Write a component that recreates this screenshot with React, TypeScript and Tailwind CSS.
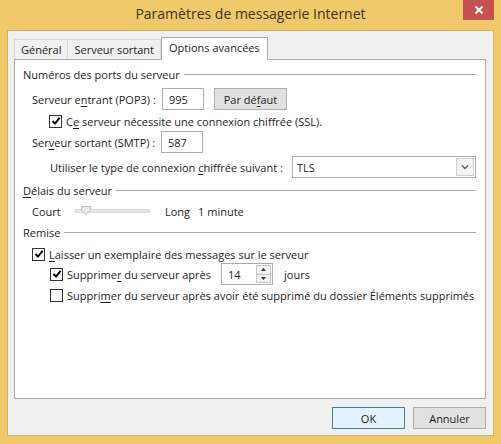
import React from "react";

const font = { fontFamily: '"Open Sans", "Noto Sans", sans-serif' };

function U(props: { children: React.ReactNode }) {
  return <span className="underline underline-offset-[2px] decoration-[1px]">{props.children}</span>;
}

function Check(props: { checked: boolean }) {
  return (
    <span className="w-[13px] h-[13px] border border-[#333] bg-white flex items-center justify-center shrink-0">
      {props.checked && (
        <svg width="10" height="10" viewBox="0 0 10 10">
          <path d="M1.5 5 L4 7.6 L8.6 1.8" stroke="#000" strokeWidth="1.9" fill="none" />
        </svg>
      )}
    </span>
  );
}

function GroupTitle(props: { children: React.ReactNode; className?: string }) {
  return (
    <div className={`flex items-center h-[16px] ${props.className ?? ""}`}>
      <span>{props.children}</span>
      <div className="flex-1 h-px bg-[#a9a9a9] ml-[4px]"></div>
    </div>
  );
}

function TextBox(props: { value: string; className?: string }) {
  return (
    <div className={`h-[22px] border border-[#abadb3] bg-white flex items-center pl-[6px] ${props.className ?? ""}`}>
      {props.value}
    </div>
  );
}

export default function App() {
  return (
    <div
      className="w-[501px] h-[444px] bg-[#f0c96b] flex flex-col text-[11px] text-[#1e1e1e] leading-none overflow-hidden whitespace-nowrap"
      style={font}
    >
      {/* Title bar */}
      <div className="relative h-[30px] flex items-center justify-center shrink-0">
        <span className="text-[14px] text-[#3b3324] -mt-[2px]">Paramètres de messagerie Internet</span>
        <div className="absolute right-[7px] top-0 w-[31px] h-[20px] bg-[#c75050] flex items-center justify-center">
          <svg width="10" height="10" viewBox="0 0 10 10">
            <path d="M1.5 1.5 L8.5 8.5 M8.5 1.5 L1.5 8.5" stroke="#fff" strokeWidth="1.8" />
          </svg>
        </div>
      </div>

      {/* Client area */}
      <div className="flex-1 mx-[7px] mb-[8px] border border-[#d8b059] bg-[#f0f0f0] flex flex-col pl-[6px] pr-[7px] pt-[6px]">
        {/* Tabs */}
        <div className="flex items-end h-[22px] relative z-10">
          <div className="h-[20px] border border-[#d9d9d9] border-b-0 bg-[#f0f0f0] px-[6px] flex items-center">Général</div>
          <div className="h-[20px] border border-[#d9d9d9] border-b-0 border-l-0 bg-[#f0f0f0] px-[6px] flex items-center">Serveur sortant</div>
          <div className="h-[23px] -mb-px border border-[#acacac] border-b-0 bg-white px-[7px] flex items-center pb-[3px]">Options avancées</div>
        </div>

        {/* Panel */}
        <div className="h-[340px] border border-[#acacac] bg-white flex flex-col pl-[8px] pr-[9px]">
          <GroupTitle className="mt-[6px]">Numéros des ports du serveur</GroupTitle>

          <div className="flex items-center h-[22px] mt-[6px] pl-[9px]">
            <span className="w-[130px]">Serveur e<U>n</U>trant (POP3) :</span>
            <TextBox value="995" className="w-[42px]" />
            <div className="ml-[10px] w-[73px] h-[22px] border border-[#adadad] bg-[#e1e1e1] flex items-center justify-center">
              Par dé<U>f</U>aut
            </div>
          </div>

          <div className="flex items-center h-[16px] mt-[3px] pl-[26px] gap-[4px]">
            <Check checked />
            <span>C<U>e</U> serveur nécessite une connexion chiffrée (SSL).</span>
          </div>

          <div className="flex items-center h-[22px] mt-[2px] pl-[9px]">
            <span className="w-[129px]">Ser<U>v</U>eur sortant (SMTP) :</span>
            <TextBox value="587" className="w-[42px]" />
          </div>

          <div className="flex items-center h-[22px] mt-[3px] pl-[27px]">
            <span className="w-[242px]">Utiliser le type de connexion <U>c</U>hiffrée suivant :</span>
            <div className="w-[184px] h-[22px] border border-[#abadb3] bg-white flex items-center pl-[4px] pr-[1px]">
              <span className="flex-1">TLS</span>
              <div className="w-[18px] h-[18px] border border-[#d0d0d0] bg-[#f4f4f4] flex items-center justify-center">
                <svg width="8" height="6" viewBox="0 0 8 6">
                  <path d="M1 1.5 L4 4.5 L7 1.5" stroke="#606060" strokeWidth="1.4" fill="none" />
                </svg>
              </div>
            </div>
          </div>

          <GroupTitle className="mt-[4px]">
            <U>D</U>élais du serveur
          </GroupTitle>

          <div className="flex items-center h-[16px] mt-[5px] pl-[9px]">
            <span className="w-[43px]">Court</span>
            <div className="relative w-[75px] h-[4px] bg-[#e7e7e7] border border-[#dadada]">
              <svg className="absolute left-[5px] -top-[4px]" width="10" height="9" viewBox="0 0 10 9">
                <path d="M0.5 0.5 H9.5 V4.5 L5 8.5 L0.5 4.5 Z" fill="#e9e9e9" stroke="#c4c4c4" />
              </svg>
            </div>
            <span className="ml-[15px]">Long</span>
            <span className="ml-[8px]">1 minute</span>
          </div>

          <GroupTitle className="mt-[5px]">Remise</GroupTitle>

          <div className="flex items-center h-[16px] mt-[6px] pl-[9px] gap-[4px]">
            <Check checked />
            <span>
              <U>L</U>aisser un exemplaire des messages sur le serveur
            </span>
          </div>

          <div className="flex items-center h-[22px] mt-[1px] pl-[27px]">
            <Check checked />
            <span className="ml-[4px] w-[154px]">
              Supprime<U>r</U> du serveur après
            </span>
            <div className="w-[52px] h-[22px] border border-[#abadb3] bg-white flex items-center pl-[6px] pr-[1px]">
              <span className="flex-1">14</span>
              <div className="w-[15px] h-[18px] flex flex-col border border-[#c8c8c8]">
                <div className="flex-1 bg-[#f2f2f2] border-b border-[#c8c8c8] flex items-center justify-center">
                  <svg width="5" height="3" viewBox="0 0 5 3">
                    <path d="M0 3 L2.5 0 L5 3 Z" fill="#333" />
                  </svg>
                </div>
                <div className="flex-1 bg-[#f2f2f2] flex items-center justify-center">
                  <svg width="5" height="3" viewBox="0 0 5 3">
                    <path d="M0 0 L5 0 L2.5 3 Z" fill="#333" />
                  </svg>
                </div>
              </div>
            </div>
            <span className="ml-[11px]">jours</span>
          </div>

          <div className="flex items-center h-[16px] mt-[2px] pl-[27px] gap-[4px]">
            <Check checked={false} />
            <span>
              Suppri<U>m</U>er du serveur après avoir été supprimé du dossier Éléments supprimés
            </span>
          </div>
        </div>

        {/* Buttons */}
        <div className="flex justify-end gap-[8px] mt-[8px]">
          <div className="w-[73px] h-[22px] border border-[#3c7fb1] bg-[#e5f1fb] flex items-center justify-center">OK</div>
          <div className="w-[73px] h-[22px] border border-[#adadad] bg-[#e1e1e1] flex items-center justify-center">Annuler</div>
        </div>
      </div>
    </div>
  );
}
